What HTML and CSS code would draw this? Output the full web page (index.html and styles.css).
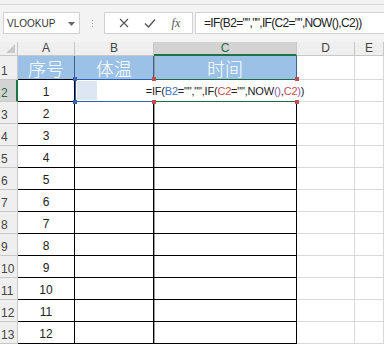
FILE: index.html
```
<!DOCTYPE html>
<html lang="zh">
<head>
    <meta charset="UTF-8">
    <title>Excel</title>
    <link rel="stylesheet" href="styles.css">
</head>
<body>
    <div class="ribbon"></div>

    <!-- 编辑栏 -->
    <div class="fbar">
        <div class="namebox">
            <span>VLOOKUP</span>
            <svg class="caret" width="7" height="4" viewBox="0 0 7 4"><path d="M0 0h7L3.5 4z" fill="#666"/></svg>
        </div>
        <div class="grip"><i></i><i></i><i></i></div>
        <div class="funcs">
            <svg width="10" height="10" viewBox="0 0 10 10"><path d="M1 1l8 8M9 1l-8 8" stroke="#555" stroke-width="1.1" fill="none"/></svg>
            <svg width="12" height="10" viewBox="0 0 12 10"><path d="M1 5.5l3.5 3.5L11 1.5" stroke="#555" stroke-width="1.4" fill="none"/></svg>
            <span class="fx">fx</span>
        </div>
        <div class="formula">=IF(B2="","",IF(C2="",NOW(),C2))</div>
    </div>

    <!-- 工作表 -->
    <div class="sheet">
        <div class="h corner"><span class="tri"></span></div>
        <div class="h">A</div>
        <div class="h">B</div>
        <div class="h sel-col">C</div>
        <div class="h">D</div>
        <div class="h">E</div>

        <div class="rh">1</div>
        <div class="t title">序号</div>
        <div class="t title">体温</div>
        <div class="t title tc c1">时间</div>
        <div class="c"></div>
        <div class="c"></div>

        <div class="rh sel-row">2</div>
        <div class="t">1</div>
        <div class="t b2"><span class="ref"></span><span class="tint"></span></div>
        <div class="t tc c2">
            <span class="edit">=IF(<b class="blue">B2</b>="","",IF(<b class="red">C2</b>="",NOW<b class="purple">()</b>,<b class="red">C2</b><b class="purple">)</b>)</span>
            <i class="dot tl"></i><i class="dot tr"></i><i class="dot bl"></i><i class="dot br"></i>
        </div>
        <div class="c"></div>
        <div class="c"></div>

        <div class="rh">3</div><div class="t">2</div><div class="t"></div><div class="t tc"></div><div class="c"></div><div class="c"></div>
        <div class="rh">4</div><div class="t">3</div><div class="t"></div><div class="t tc"></div><div class="c"></div><div class="c"></div>
        <div class="rh">5</div><div class="t">4</div><div class="t"></div><div class="t tc"></div><div class="c"></div><div class="c"></div>
        <div class="rh">6</div><div class="t">5</div><div class="t"></div><div class="t tc"></div><div class="c"></div><div class="c"></div>
        <div class="rh">7</div><div class="t">6</div><div class="t"></div><div class="t tc"></div><div class="c"></div><div class="c"></div>
        <div class="rh">8</div><div class="t">7</div><div class="t"></div><div class="t tc"></div><div class="c"></div><div class="c"></div>
        <div class="rh">9</div><div class="t">8</div><div class="t"></div><div class="t tc"></div><div class="c"></div><div class="c"></div>
        <div class="rh">10</div><div class="t">9</div><div class="t"></div><div class="t tc"></div><div class="c"></div><div class="c"></div>
        <div class="rh">11</div><div class="t">10</div><div class="t"></div><div class="t tc"></div><div class="c"></div><div class="c"></div>
        <div class="rh">12</div><div class="t">11</div><div class="t"></div><div class="t tc"></div><div class="c"></div><div class="c"></div>
        <div class="rh">13</div><div class="t">12</div><div class="t"></div><div class="t tc"></div><div class="c"></div><div class="c"></div>
    </div>
</body>
</html>
```
FILE: styles.css
```
* {
    box-sizing: border-box;
}
body {
    margin: 0;
    width: 384px;
    height: 346px;
    overflow: hidden;
    background: #fff;
    font-family: 'Liberation Sans', 'Noto Sans CJK SC', sans-serif;
    color: #222;
}
.ribbon {
    height: 5px;
    background: #f3f3f3;
    border-bottom: 1px solid #d6d6d6;
}

/* 编辑栏 */
.fbar {
    height: 37px;
    background: #f3f3f3;
    display: flex;
    align-items: flex-start;
    padding: 7px 0 0 3px;
}
.namebox {
    width: 77px;
    height: 22px;
    background: #fff;
    border: 1px solid #d2d2d2;
    display: flex;
    align-items: center;
    justify-content: space-between;
    padding: 0 4px 0 3px;
    font-size: 10px;
    color: #333;
}
.caret {
    margin-top: 1px;
}
.grip {
    width: 24px;
    height: 22px;
    display: flex;
    flex-direction: column;
    align-items: center;
    justify-content: center;
    gap: 2px;
}
.grip i {
    width: 1px;
    height: 1px;
    background: #999;
}
.funcs {
    width: 89px;
    height: 22px;
    background: #fff;
    border: 1px solid #d2d2d2;
    display: flex;
    align-items: center;
    justify-content: space-around;
    padding: 0 4px 0 6px;
}
.fx {
    font-family: 'Liberation Serif', serif;
    font-style: italic;
    font-size: 12px;
    color: #555;
}
.formula {
    flex: 1;
    margin-left: 2px;
    height: 22px;
    background: #fff;
    border: 1px solid #d2d2d2;
    border-right: none;
    padding-left: 8px;
    font-size: 12px;
    line-height: 20px;
    letter-spacing: -0.7px;
    white-space: nowrap;
}

/* 工作表 */
.sheet {
    display: grid;
    grid-template-columns: 18px 57px 79px 143px 58px 1fr;
    grid-template-rows: 14px 24px repeat(12, 22px);
}
.sheet > div {
    border-right: 1px solid #d9d9d9;
    border-bottom: 1px solid #d9d9d9;
    position: relative;
}
.h {
    background: #efefef;
    font-size: 12px;
    color: #444;
    text-align: center;
    line-height: 13px;
    border-color: #c8c8c8 !important;
}
.corner .tri {
    position: absolute;
    right: 2px;
    bottom: 2px;
    width: 0;
    height: 0;
    border-left: 9px solid transparent;
    border-bottom: 9px solid #c9c9c9;
}
.sel-col {
    background: #d3d3d3;
    color: #1f6b42;
    border-bottom: 2px solid #217346 !important;
}
.rh {
    background: #efefef;
    font-size: 12px;
    color: #444;
    display: flex;
    align-items: flex-end;
    padding: 0 0 2px 1px;
    line-height: 1;
    border-color: #c8c8c8 !important;
}
.sel-row {
    background: #d3d3d3;
    color: #1f6b42;
    border-right: 2px solid #217346 !important;
}
.sheet > .t {
    border-right: 1px solid #000;
    border-bottom: 1px solid #000;
    font-size: 12px;
    display: flex;
    align-items: flex-end;
    justify-content: center;
    padding-bottom: 3px;
    line-height: 1;
}
.sheet > .title {
    background: #9bc2e6;
    color: #fff;
    font-size: 18px;
    line-height: 1;
    font-family: 'Noto Sans CJK SC', sans-serif;
    font-weight: 300;
    align-items: center;
    padding-bottom: 0;
    border-right-color: #41618a;
}
.tc {
    box-shadow: inset 1px 0 0 #9a9a9a;
}
.sheet > .c1 {
    border-bottom: 1px solid #1d6b3f;
}
.sheet > .c2 {
    border-bottom: 1px solid #1d6b3f;
}

/* 引用区域 */
.ref {
    position: absolute;
    left: 0;
    top: -1px;
    right: 0;
    bottom: -1px;
    border: 1px solid #2f5fb3;
    border-right: none;
}
.tint {
    position: absolute;
    left: 2px;
    top: 1px;
    width: 20px;
    height: 19px;
    background: #dde7f4;
}
.b2::before,
.b2::after {
    content: '';
    position: absolute;
    left: -2px;
    width: 4px;
    height: 4px;
    background: #3563b0;
    z-index: 2;
}
.b2::before {
    top: -3px;
}
.b2::after {
    bottom: -3px;
}
.edit {
    position: absolute;
    left: 50%;
    top: 1px;
    bottom: 1px;
    transform: translateX(-50%);
    background: #fff;
    white-space: nowrap;
    font-size: 11px;
    letter-spacing: -0.2px;
    line-height: 20px;
    padding: 0 1px;
    z-index: 1;
}
.edit b {
    font-weight: normal;
}
.blue {
    color: #3e6fc2;
}
.red {
    color: #c0504d;
}
.purple {
    color: #8a5aa8;
}
.dot {
    position: absolute;
    width: 4px;
    height: 4px;
    background: #c0504d;
    z-index: 2;
}
.tl { left: -2px; top: -3px; }
.tr { right: -3px; top: -3px; }
.bl { left: -2px; bottom: -3px; }
.br { right: -3px; bottom: -3px; }
```
